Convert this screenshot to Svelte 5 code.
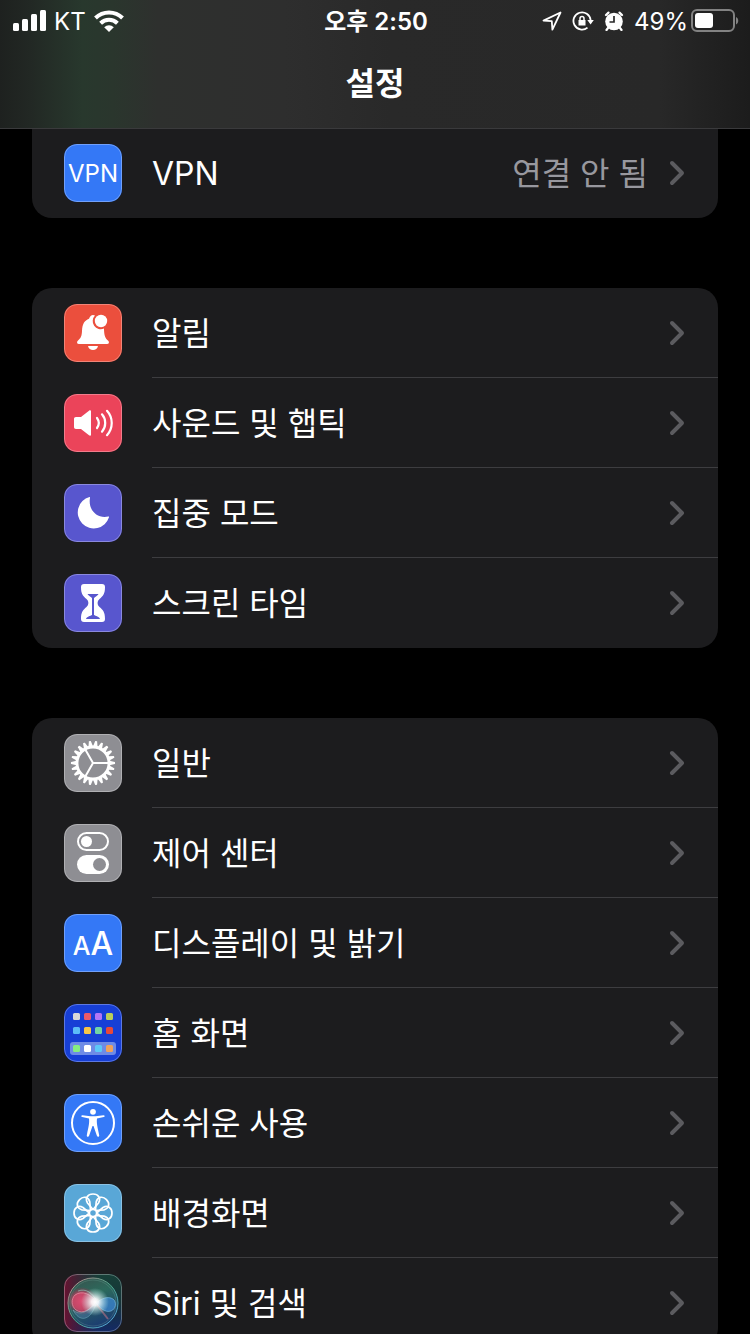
<script>
    const groups = [
        [
            { id: 'vpn', label: 'VPN', value: '연결 안 됨', color: '#3478f6' },
        ],
        [
            { id: 'bell',  label: '알림',          color: '#eb4f3d' },
            { id: 'sound', label: '사운드 및 햅틱', color: '#eb445a' },
            { id: 'moon',  label: '집중 모드',      color: '#5856ce' },
            { id: 'glass', label: '스크린 타임',    color: '#5856ce' },
        ],
        [
            { id: 'gear',   label: '일반',            color: '#8e8e93' },
            { id: 'toggle', label: '제어 센터',        color: '#8e8e93' },
            { id: 'text',   label: '디스플레이 및 밝기', color: '#3478f6' },
            { id: 'home',   label: '홈 화면',          color: '#173fd6' },
            { id: 'access', label: '손쉬운 사용',      color: '#3478f6' },
            { id: 'flower', label: '배경화면',         color: '#59a7d7' },
            { id: 'siri',   label: 'Siri 및 검색',     color: '#1c2a3c' },
        ],
    ];

    const teeth  = Array.from({ length: 22 }, (_, i) => i * 360 / 22);
    const petals = [0, 45, 90, 135, 180, 225, 270, 315];

    // home screen apps: two rows and the dock
    const apps = [
        ['#d8d8d8', '#eb5a68', '#b176f5', '#b9cf5a'],
        ['#5cbcf8', '#f8c546', '#70d5a5', '#e8493a'],
        ['#86ee80', '#ffffff', '#5cc8f8', '#f0a35c'],
    ];
    const appY = [9, 23, 41];
</script>

{#snippet icon(id)}
    <svg class="glyph" viewBox="0 0 58 58" aria-hidden="true">
    {#if id === 'bell'}
        <path fill="#fff" d="M15 40c-2 0-2.600-1.800-1.200-3.200 3-2.700 4-4.600 4.200-9.800.3-7 2.500-10.500 7-12.200.8-2.400 2.300-3.800 4-3.800.8 0 1.400.200 2 .6a8 8 0 0 0 9 12.900c.1 7 1.100 9.400 4.200 12.300 1.400 1.400.8 3.200-1.200 3.200z"/>
        <circle cx="37" cy="17" r="6.200" fill="#fff"/>
        <path fill="#fff" d="M24 42h10c-.5 2.600-2.500 4-5 4s-4.500-1.400-5-4z"/>
    {:else if id === 'sound'}
        <path fill="#fff" d="M12 23h5l8-6.300c1-.8 2-.4 2 .8v23c0 1.200-1 1.600-2 .8L17 35h-5c-1.300 0-2-.7-2-2v-8c0-1.300.7-2 2-2z"/>
        <path fill="none" stroke="#fff" stroke-width="2.200" stroke-linecap="round" d="M33 24c2.200 3 2.200 7 0 10M38 20.300c4.300 5 4.300 12.400 0 17.400M43 16.800c6.300 7 6.300 17.400 0 24.400"/>
    {:else if id === 'moon'}
        <path fill="#fff" d="M25.500 13c.5-.1.700.3.500.8C24 25 32 35 44.300 32.500c.6-.1.900.2.700.8A16 16 0 1 1 25.500 13z"/>
    {:else if id === 'glass'}
        <path fill="#fff" d="M20 10h18c2 0 3 1 3 3 0 7-2 9-5.500 12-2.500 2.200-2.500 5.800 0 8C39 36 41 38 41 45c0 2-1 3-3 3H20c-2 0-3-1-3-3 0-7 2-9 5.500-12 2.500-2.200 2.500-5.800 0-8C19 22 17 20 17 13c0-2 1-3 3-3z"/>
        <path fill="#5856ce" d="M23.500 20h11c-.5 1.200-3 2.800-4.500 4v17c1.500 1 5.500 1.500 6 4H22c.5-2.500 4.500-3 6-4V24c-1.500-1.200-4-2.800-4.500-4z"/>
    {:else if id === 'gear'}
        {#each teeth as a}
            <path fill="#fff" transform="rotate({a} 29 29)" d="M45.500 26.700l5.300 1.300c.4.200.4 1.800 0 2l-5.300 1.300z"/>
        {/each}
        <circle cx="29" cy="29" r="16" fill="none" stroke="#fff" stroke-width="2.800"/>
        <path fill="none" stroke="#fff" stroke-width="2" d="M45 29H29l-8-14M29 29l-8 14"/>
    {:else if id === 'toggle'}
        <rect x="14" y="9" width="30" height="17" rx="8.500" fill="none" stroke="#fff" stroke-width="2"/>
        <circle cx="22.500" cy="17.500" r="5.500" fill="#fff"/>
        <rect x="13" y="31" width="32" height="19" rx="9.500" fill="#fff"/>
        <circle cx="35.500" cy="40.500" r="6.500" fill="#8e8e93"/>
    {:else if id === 'home'}
        <rect x="6" y="38" width="46" height="13" rx="3" fill="#6e8be6"/>
        {#each apps as line, r}
            {#each line as c, i}
                <rect x={9 + i * 11} y={appY[r]} width="7" height="7" rx="1.500" fill={c}/>
            {/each}
        {/each}
    {:else if id === 'access'}
        <circle cx="29" cy="29" r="21" fill="none" stroke="#fff" stroke-width="2"/>
        <circle cx="29" cy="17.800" r="2.900" fill="#fff"/>
        <path fill="#fff" d="M18.500 21.200l8 1h5l8-1c1.400-.1 1.600 1.600.3 1.900L33 24.600c-.6 4.400.4 8 2.200 16.600.3 1.700-1.800 2.200-2.300.6L29.500 32h-1l-3.400 9.800c-.5 1.600-2.600 1.100-2.300-.6 1.800-8.600 2.800-12.200 2.200-16.600l-6.800-1.500c-1.300-.3-1.100-2 .3-1.900z"/>
    {:else if id === 'flower'}
        <g fill="none" stroke="#fff" stroke-width="1.700">
            {#each petals as a}
                <path transform="rotate({a} 29 29)" d="M29 25.500L23.500 19C20.800 14.500 23.500 10 29 10s8.200 4.500 5.500 9L29 25.500"/>
            {/each}
            <circle cx="29" cy="29" r="3.600"/>
        </g>
    {:else if id === 'siri'}
        <defs>
            <linearGradient id="siri-red" x2="1"><stop offset="0" stop-color="#6a1230"/><stop offset=".6" stop-color="#3a1838" stop-opacity="0"/></linearGradient>
            <linearGradient id="siri-green" x2="0" y2="1"><stop offset="0" stop-color="#174038"/><stop offset=".5" stop-color="#163338"/><stop offset="1" stop-color="#142a66"/></linearGradient>
            <linearGradient id="siri-ring" x2="1" y2="1"><stop offset="0" stop-color="#c98a90"/><stop offset=".5" stop-color="#4ba287"/><stop offset="1" stop-color="#57a6e8"/></linearGradient>
            <linearGradient id="siri-orb" x2=".4" y2="1"><stop offset="0" stop-color="#3a4f4c"/><stop offset=".45" stop-color="#2c6a5c"/><stop offset="1" stop-color="#1c3f70"/></linearGradient>
            <radialGradient id="siri-pink"><stop offset="0" stop-color="#e2507a"/><stop offset=".6" stop-color="#cf3f62" stop-opacity=".8"/><stop offset="1" stop-color="#a02a4a" stop-opacity="0"/></radialGradient>
            <radialGradient id="siri-glow"><stop offset="0" stop-color="#fff"/><stop offset=".25" stop-color="#fff" stop-opacity=".9"/><stop offset="1" stop-color="#bdf5f0" stop-opacity="0"/></radialGradient>
        </defs>
        <rect width="58" height="58" fill="url(#siri-green)"/>
        <rect width="58" height="58" fill="url(#siri-red)"/>
        <circle cx="29" cy="29" r="25" fill="url(#siri-orb)" stroke="url(#siri-ring)"/>
        <circle cx="29" cy="29" r="23" fill="none" stroke="#7fb8a8" stroke-opacity=".25"/>
        <ellipse cx="18" cy="27" rx="15" ry="14" fill="url(#siri-pink)"/>
        <path fill="#d8486c" fill-opacity=".5" stroke="#f2a0b4" stroke-opacity=".6" d="M32 28C27 20 18 16 11 21c-4 4-4 11 1 15 7 5 15-1 20-8z"/>
        <path fill="#6c93c8" fill-opacity=".3" stroke="#8fd6e0" stroke-opacity=".35" d="M31 29C24 38 16 42 9 36c6 12 17 12 23-6"/>
        <path fill="#3f8ede" fill-opacity=".65" stroke="#8cd0f0" stroke-opacity=".5" d="M32 29c6-5 12-7 17-4 4 3 3 10-2 12-6 2-11-3-15-8z"/>
        <path stroke="#d87888" stroke-opacity=".5" stroke-width="2" d="M33 31l11 14"/>
        <path fill="none" stroke="#9fe8d8" stroke-opacity=".5" d="M14 17c8-3 15 2 19 11"/>
        <circle cx="31" cy="28" r="14" fill="url(#siri-glow)"/>
    {/if}
    </svg>
{/snippet}

<div class="phone">
    <header>
        <div class="status">
            <div class="side">
                <svg width="33" height="22" viewBox="0 0 33 22" fill="#fff" role="img" aria-label="신호">
                    <rect x="0" y="13" width="6" height="8" rx="1.500"/>
                    <rect x="9" y="9" width="6" height="12" rx="1.500"/>
                    <rect x="18" y="4" width="6" height="17" rx="1.500"/>
                    <rect x="27" y="0" width="6" height="21" rx="1.500"/>
                </svg>
                <span>KT</span>
                <svg width="30" height="22" viewBox="0 0 30 22" fill="none" stroke="#fff" stroke-width="4" role="img" aria-label="Wi-Fi">
                    <path d="M1.500 8a19.300 19.300 0 0 1 27 0M6.600 13.200a12 12 0 0 1 16.800 0"/>
                    <path fill="#fff" stroke="none" d="M10.200 17.200a7 7 0 0 1 9.600 0L15 22z"/>
                </svg>
            </div>
            <time>오후 2:50</time>
            <div class="side end">
                <svg width="20" height="20" viewBox="0 0 20 20" fill="none" stroke="#fff" stroke-width="1.800" stroke-linejoin="round" aria-hidden="true">
                    <path d="M18.500 1.500L1.500 9.600l8.300.6.600 8.500z"/>
                </svg>
                <svg width="22" height="20" viewBox="0 0 22 20" aria-hidden="true">
                    <path fill="none" stroke="#fff" stroke-width="1.800" d="M18.600 9A8.600 8.600 0 1 0 15.500 16.600"/>
                    <path fill="#fff" d="M15.300 9h6.500l-3.200 4.400zM6.500 9h7v5.500h-7z"/>
                    <path fill="none" stroke="#fff" stroke-width="1.500" d="M8 9.500V7.500a2 2 0 0 1 4 0v2"/>
                </svg>
                <svg width="20" height="20" viewBox="0 0 20 20" aria-hidden="true">
                    <circle cx="10" cy="10.500" r="8.800" fill="#fff"/>
                    <path stroke="#fff" stroke-width="2.200" stroke-linecap="round" d="M2 4L4.500 1.600M18 4L15.500 1.600M4 17l-1.500 2M16 17l1.500 2"/>
                    <path fill="none" stroke="#292929" stroke-width="1.700" d="M10 5v6H5.500"/>
                </svg>
                <span>49%</span>
                <svg class="battery" width="48" height="24" viewBox="0 0 48 24" role="img" aria-label="배터리">
                    <rect x="1" y="1" width="42" height="21" rx="5" fill="none" stroke="#828282" stroke-width="2"/>
                    <rect x="4" y="4" width="18" height="15" rx="3" fill="#fff"/>
                    <path fill="#828282" d="M45 8c3 1.500 3 6 0 7.500z"/>
                </svg>
            </div>
        </div>
        <h1>설정</h1>
    </header>

    <main>
    {#each groups as rows}
        <ul>
        {#each rows as row}
            <li>
                <a href="#{row.id}">
                    <span class="tile" style:background-color={row.color}>
                        {#if row.id === 'vpn'}
                            <span class="vpn">VPN</span>
                        {:else if row.id === 'text'}
                            <span class="small">A</span><span class="big">A</span>
                        {:else}
                            {@render icon(row.id)}
                        {/if}
                    </span>
                    <span class="body">
                        <span class="label">{row.label}</span>
                        {#if row.value}<span class="value">{row.value}</span>{/if}
                        <svg class="chevron" width="16" height="26" viewBox="0 0 16 26" aria-hidden="true">
                            <path d="M3 3L13 13 3 23"/>
                        </svg>
                    </span>
                </a>
            </li>
        {/each}
        </ul>
    {/each}
    </main>
</div>


<style>
    :global(body) { background: #000; }

    .phone {
        display: flex;
        flex-direction: column;
        height: 100vh;
        overflow: hidden;
        color: #fff;
        background: #000;
        font-family: Inter, "Noto Sans CJK KR", sans-serif;
    }

    header {
        flex: none;
        height: 128px;
        border-bottom: 1px solid #3a3a3c;
        background: linear-gradient(90deg, #1e211f 0%, #222824 4%, #28382d 11%, #2a362d 15%, #2e302e 21%, #2e2e2e 38%, #292929 52%, #282828 88%, #1c1c1c 100%);
    }

    .status {
        display: grid;
        grid-template-columns: 1fr auto 1fr;
        align-items: center;
        height: 40px;
        padding: 0 11px 0 13px;
        font-size: 24px;
        line-height: 40px;
    }

    .side { display: flex; align-items: center; gap: 8px; }
    .end  { justify-content: flex-end; gap: 10px; }
    .side span, time { padding-top: 2px; }
    time  { font-weight: 600; }

    .battery { margin-left: -7px; }

    h1 {
        margin: 0;
        padding-top: 20px;
        font-size: 32px;
        font-weight: 600;
        line-height: 48px;
        text-align: center;
    }

    main {
        flex: 1;
        min-height: 0;
        overflow: hidden;
        padding: 0 32px;
    }

    ul {
        margin: 0 0 70px;
        padding: 0;
        list-style: none;
        overflow: hidden;
        border-radius: 20px;
        background: #1c1c1e;
    }
    ul:first-child { border-radius: 0 0 20px 20px; margin-top: -1px; }

    a {
        display: flex;
        align-items: center;
        gap: 30px;
        height: 90px;
        padding-left: 32px;
        color: inherit;
        text-decoration: none;
    }

    .tile {
        position: relative;
        display: flex;
        flex: none;
        align-items: baseline;
        justify-content: center;
        width: 58px;
        height: 58px;
        overflow: hidden;
        border-radius: 13px;
        line-height: 60px;
    }
    .tile::after {
        content: '';
        position: absolute;
        inset: 0;
        border: 1px solid rgba(255, 255, 255, .3);
        border-radius: 13px;
    }

    .glyph { display: block; width: 58px; height: 58px; }
    .vpn   { font-size: 24px; }
    .small { font-size: 25px; font-weight: 500; }
    .big   { font-size: 32px; font-weight: 500; }

    .body {
        display: flex;
        flex: 1;
        align-items: center;
        box-sizing: border-box;
        height: 90px;
        padding-right: 33px;
        border-bottom: 1px solid #3d3d40;
    }
    li:last-child .body { border-bottom-color: transparent; }

    .label, .value { padding-top: 3px; font-size: 32px; line-height: 48px; }
    .label { flex: 1; }
    .value { margin-right: 21px; color: #98989f; }

    .chevron path {
        fill: none;
        stroke: #5b5b5f;
        stroke-width: 4;
        stroke-linecap: round;
        stroke-linejoin: round;
    }
</style>
